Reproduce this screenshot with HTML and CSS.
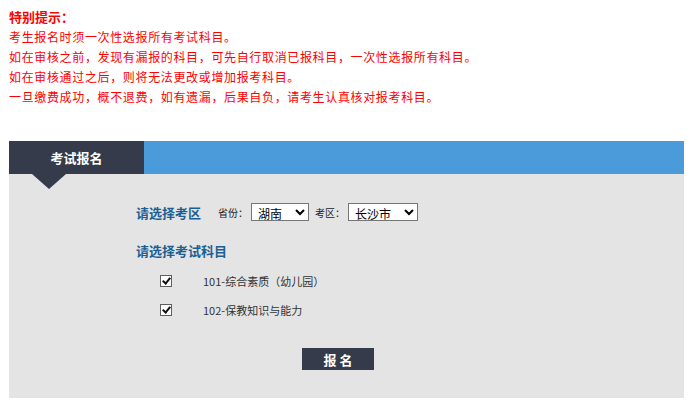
FILE: index.html
```html
<!DOCTYPE html>
<html lang="zh-CN">
  <head>
    <meta charset="UTF-8" />
    <meta name="viewport" content="width=device-width, initial-scale=1.0" />
    <title>考试报名</title>
    <link rel="stylesheet" href="styles.css">
  </head>
  <body>
    <div class="notice">
      <p class="notice-title">特别提示：</p>
      <p>考生报名时须一次性选报所有考试科目。</p>
      <p>如在审核之前，发现有漏报的科目，可先自行取消已报科目，一次性选报所有科目。</p>
      <p>如在审核通过之后，则将无法更改或增加报考科目。</p>
      <p>一旦缴费成功，概不退费，如有遗漏，后果自负，请考生认真核对报考科目。</p>
    </div>

    <div class="panel">
      <div class="panel-head">
        <div class="panel-tab">考试报名</div>
      </div>

      <div class="panel-body">
        <div class="area-row">
          <span class="section-title">请选择考区</span>
          <label class="small-label first">省份：</label>
          <select class="sel sel-province">
            <option>湖南</option>
          </select>
          <label class="small-label">考区：</label>
          <select class="sel sel-city">
            <option>长沙市</option>
          </select>
        </div>

        <div class="section-title subjects-title">请选择考试科目</div>

        <ul class="subject-list">
          <li>
            <input type="checkbox" class="check" checked />
            <span>101-综合素质（幼儿园）</span>
          </li>
          <li>
            <input type="checkbox" class="check" checked />
            <span>102-保教知识与能力</span>
          </li>
        </ul>

        <div class="actions">
          <button class="submit-btn">报 名</button>
        </div>
      </div>
    </div>
  </body>
</html>
```

FILE: styles.css
```css
/* exam registration page */
body {
  margin: 0;
  padding: 0;
  background-color: #fff;
  font-family: "Noto Sans CJK SC", "Liberation Sans", sans-serif;
  font-size: 12px;
}

.notice {
  padding: 7px 0 0 9px;
  color: #ff0000;
}

.notice p {
  margin: 0;
  line-height: 20px;
  letter-spacing: 0.65px;
}

.notice p.notice-title {
  font-weight: bold;
  font-size: 13px;
  letter-spacing: 0;
}

.panel {
  width: 675px;
  margin: 34px 0 0 9px;
}

.panel-head {
  display: flex;
  height: 33px;
  background-color: #4b9bda;
}

.panel-tab {
  position: relative;
  width: 135px;
  background-color: #353b4a;
  color: #fff;
  font-weight: bold;
  font-size: 13px;
  display: flex;
  align-items: center;
  justify-content: center;
}

/* little arrow under the tab */
.panel-tab::after {
  content: "";
  position: absolute;
  left: 23px;
  bottom: -15px;
  border-left: 17px solid transparent;
  border-right: 17px solid transparent;
  border-top: 15px solid #353b4a;
}

.panel-body {
  background-color: #e4e4e4;
  height: 224px;
  box-sizing: border-box;
  padding: 29px 0 0 127px;
}

.area-row {
  display: flex;
  align-items: center;
  height: 18px;
}

.section-title {
  color: #1b5f95;
  font-weight: bold;
  font-size: 13px;
}

.small-label {
  font-size: 10px;
  color: #222;
  margin-right: 3px;
}

.small-label.first {
  margin-left: 17px;
}

.sel {
  height: 18px;
  box-sizing: border-box;
  font-family: "Noto Sans CJK SC", "Liberation Sans", sans-serif;
  font-size: 12px;
  border: 1px solid #767676;
  border-radius: 0;
  background-color: #fff;
  padding: 0 0 0 2px;
  margin-right: 6px;
  line-height: 14px;
}

.sel-province {
  width: 58px;
}

.sel-city {
  width: 70px;
}

.subjects-title {
  margin-top: 20px;
  line-height: 20px;
}

.subject-list {
  list-style-type: none;
  margin: 5px 0 0 0;
  padding: 0;
}

.subject-list li {
  display: flex;
  align-items: center;
  height: 29px;
  font-size: 11px;
  color: #333;
}

.check {
  appearance: none;
  -webkit-appearance: none;
  position: relative;
  width: 12px;
  height: 12px;
  margin: 0 31px 0 24px;
  box-sizing: border-box;
  border: 1px solid #5e5e5e;
  background-color: #fff;
}

.check:checked::after {
  content: "";
  position: absolute;
  left: 3px;
  top: 0px;
  width: 3px;
  height: 6px;
  border-right: 2px solid #111;
  border-bottom: 2px solid #111;
  transform: rotate(40deg);
}

.actions {
  margin-top: 24px;
  padding-left: 166px;
}

.submit-btn {
  width: 72px;
  height: 22px;
  border: none;
  background-color: #353b4a;
  color: #fff;
  font-family: "Noto Sans CJK SC", "Liberation Sans", sans-serif;
  font-weight: bold;
  font-size: 13px;
  cursor: pointer;
  padding: 0;
}
```
